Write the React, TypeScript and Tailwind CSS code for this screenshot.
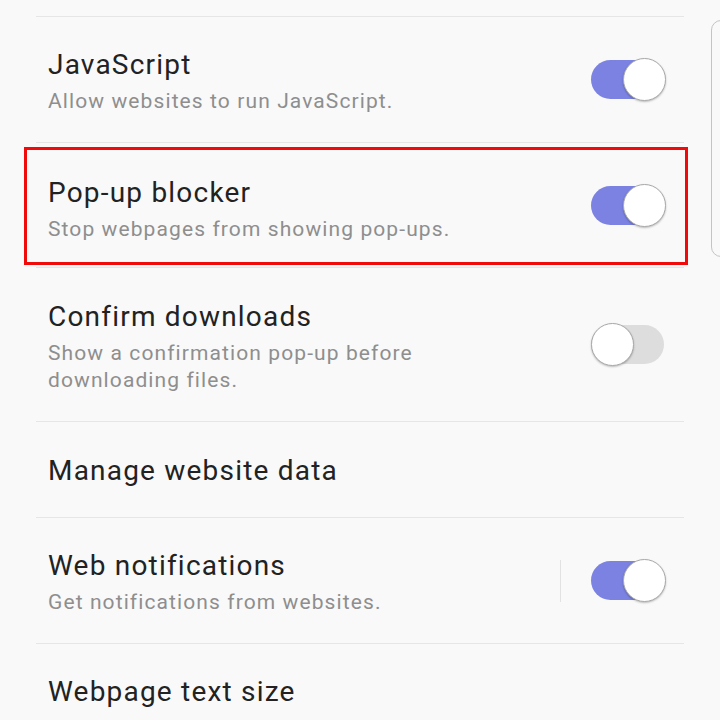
import type { ReactNode } from "react";

function Toggle({ on }: { on: boolean }) {
  return (
    <div className="relative w-[75px] h-[43px] shrink-0">
      <div
        className={`absolute left-0 top-[2px] w-[73px] h-[39px] rounded-full ${on ? "bg-[#7b82e2]" : "bg-[#dddddd]"}`}
      />
      <div
        className={`absolute top-0 w-[43px] h-[43px] rounded-full bg-white border border-[#a9a9a9] shadow-[0_1px_2px_rgba(0,0,0,0.25)] ${on ? "right-0" : "left-0"}`}
      />
    </div>
  );
}

function Divider() {
  return <div className="h-px bg-[#e6e6e6]" />;
}

function Row({
  title,
  sub,
  toggle,
  height,
  pt,
  extra,
  children,
}: {
  title: string;
  sub?: ReactNode;
  toggle?: boolean;
  height: string;
  pt: string;
  extra?: ReactNode;
  children?: ReactNode;
}) {
  return (
    <div className={`relative flex justify-between pl-[12px] pr-[18px] ${height}`}>
      <div className={`flex flex-col ${pt}`}>
        <div className="text-[28px] leading-[34px] tracking-[1.2px] text-[#222222]">{title}</div>
        {sub && (
          <div className="mt-[6px] text-[21px] leading-[27px] tracking-[1.1px] text-[#8e8e8e]">
            {sub}
          </div>
        )}
      </div>
      {toggle !== undefined && (
        <div className="flex items-center self-center gap-[30px]">
          {extra}
          <Toggle on={toggle} />
        </div>
      )}
      {children}
    </div>
  );
}

export default function App() {
  return (
    <div
      className="relative w-[720px] h-[720px] overflow-hidden bg-[#f9f9f9]"
      style={{ fontFamily: "Roboto, 'Noto Sans', sans-serif" }}
    >
      <div className="mx-[36px] pt-[16px]">
        <Divider />
        <Row
          title="JavaScript"
          sub="Allow websites to run JavaScript."
          toggle={true}
          height="h-[125px]"
          pt="pt-[31px]"
        />
        <Divider />
        <Row
          title="Pop-up blocker"
          sub="Stop webpages from showing pop-ups."
          toggle={true}
          height="h-[124px]"
          pt="pt-[33px]"
        >
          <div className="absolute left-[-12px] right-[-4px] top-[4px] bottom-[2px] border-[3px] border-[#f00a0a] pointer-events-none" />
        </Row>
        <Divider />
        <Row
          title="Confirm downloads"
          sub={
            <>
              Show a confirmation pop-up before
              <br />
              downloading files.
            </>
          }
          toggle={false}
          height="h-[153px]"
          pt="pt-[32px]"
        />
        <Divider />
        <Row title="Manage website data" height="h-[95px]" pt="pt-[32px]" />
        <Divider />
        <Row
          title="Web notifications"
          sub="Get notifications from websites."
          toggle={true}
          height="h-[125px]"
          pt="pt-[31px]"
          extra={<div className="w-px h-[42px] bg-[#e2e2e2]" />}
        />
        <Divider />
        <Row title="Webpage text size" height="h-[95px]" pt="pt-[31px]" />
      </div>

      {/* edge of the panel behind */}
      <div className="absolute left-[711px] top-[20px] w-[30px] h-[237px] rounded-[10px] border border-[#c4c4c4]" />
    </div>
  );
}
